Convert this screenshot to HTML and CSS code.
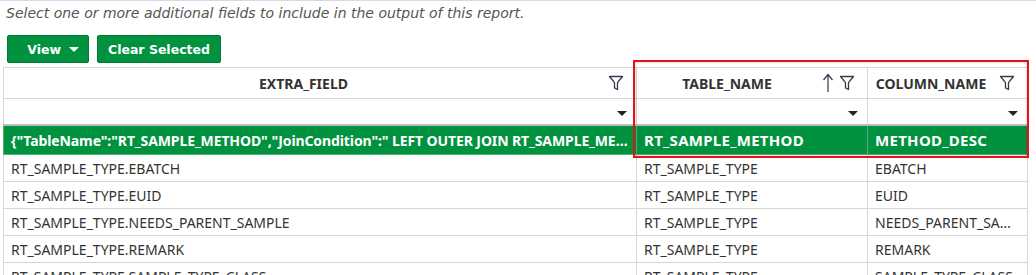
FILE: index.html
```html
<!DOCTYPE html>
<html lang="en">

<head>
  <meta charset="UTF-8">
  <title>Additional Fields</title>
  <link rel="stylesheet" href="styles.css">
</head>

<body>
  <p class="hint">Select one or more additional fields to include in the output of this report.</p>

  <div class="toolbar">
    <button class="btn btn-view">View <span class="caret"></span></button>
    <button class="btn">Clear Selected</button>
  </div>

  <div class="grid">
    <table>
      <colgroup>
        <col class="colExtra">
        <col class="colTable">
        <col class="colColumn">
      </colgroup>
      <thead>
        <tr class="headRow">
          <th>
            <div class="head">
              <span class="label">EXTRA_FIELD</span>
              <svg class="funnel" viewBox="0 0 16 16"><path d="M1.5 1.5h13l-5 6.2v6.8l-3-1.6v-5.2z" /></svg>
            </div>
          </th>
          <th>
            <div class="head">
              <span class="label">TABLE_NAME</span>
              <svg class="sort" viewBox="0 0 12 20"><path d="M6 19V2M1.5 7L6 1.5 10.5 7" /></svg>
              <svg class="funnel" viewBox="0 0 16 16"><path d="M1.5 1.5h13l-5 6.2v6.8l-3-1.6v-5.2z" /></svg>
            </div>
          </th>
          <th>
            <div class="head">
              <span class="label">COLUMN_NAME</span>
              <svg class="funnel" viewBox="0 0 16 16"><path d="M1.5 1.5h13l-5 6.2v6.8l-3-1.6v-5.2z" /></svg>
            </div>
          </th>
        </tr>
        <tr class="filterRow">
          <th><span class="drop"></span></th>
          <th><span class="drop"></span></th>
          <th><span class="drop"></span></th>
        </tr>
      </thead>
      <tbody>
        <tr class="selected">
          <td class="json">{"TableName":"RT_SAMPLE_METHOD","JoinCondition":" LEFT OUTER JOIN RT_SAMPLE_METHOD ON RT_SAMPLE_METHOD.SAMPLE_METHOD_ID"}</td>
          <td>RT_SAMPLE_METHOD</td>
          <td>METHOD_DESC</td>
        </tr>
        <tr>
          <td>RT_SAMPLE_TYPE.EBATCH</td>
          <td>RT_SAMPLE_TYPE</td>
          <td>EBATCH</td>
        </tr>
        <tr>
          <td>RT_SAMPLE_TYPE.EUID</td>
          <td>RT_SAMPLE_TYPE</td>
          <td>EUID</td>
        </tr>
        <tr>
          <td>RT_SAMPLE_TYPE.NEEDS_PARENT_SAMPLE</td>
          <td>RT_SAMPLE_TYPE</td>
          <td>NEEDS_PARENT_SAMPLE</td>
        </tr>
        <tr>
          <td>RT_SAMPLE_TYPE.REMARK</td>
          <td>RT_SAMPLE_TYPE</td>
          <td>REMARK</td>
        </tr>
        <tr>
          <td>RT_SAMPLE_TYPE.SAMPLE_TYPE_CLASS</td>
          <td>RT_SAMPLE_TYPE</td>
          <td>SAMPLE_TYPE_CLASS</td>
        </tr>
      </tbody>
    </table>

    <!-- highlight box drawn over the two right columns -->
    <div class="callout"></div>
  </div>
</body>

</html>
```

FILE: styles.css
```css
body {
  margin: 0;
  background-color: white;
  font-family: "Noto Sans", "DejaVu Sans", sans-serif;
  overflow: hidden;
}

.hint {
  margin: 0;
  padding: 4px 6px 0 6px;
  height: 30px;
  box-sizing: border-box;
  font-family: "DejaVu Sans", Verdana, sans-serif;
  font-style: italic;
  font-size: 14px;
  color: #555;
  border-top: 1px solid #d5dbe6;
}

.toolbar {
  display: flex;
  gap: 8px;
  padding: 5px 0 0 7px;
  height: 37px;
  box-sizing: border-box;
}

.btn {
  background-color: #00923f;
  color: white;
  border: 1px solid #007a34;
  border-radius: 2px;
  height: 28px;
  padding: 0 10px;
  font-family: "DejaVu Sans", Verdana, sans-serif;
  font-weight: bold;
  font-size: 12.5px;
  display: flex;
  align-items: center;
}

.btn-view {
  width: 82px;
  justify-content: flex-end;
  gap: 8px;
  padding-right: 9px;
}

.caret {
  width: 0;
  height: 0;
  border-left: 5px solid transparent;
  border-right: 5px solid transparent;
  border-top: 5px solid white;
}

.grid {
  position: relative;
  margin-left: 3px;
}

table {
  border-collapse: collapse;
  table-layout: fixed;
  width: 1024px;
  font-size: 14px;
  color: #333;
}

.colExtra {
  width: 633px;
}

.colTable {
  width: 231px;
}

.colColumn {
  width: 160px;
}

th,
td {
  border: 1px solid #d6d6d6;
  padding: 0;
}

.headRow th {
  height: 30px;
  font-size: 14px;
  font-weight: bold;
  color: #333;
}

.head {
  display: flex;
  align-items: center;
  padding-right: 12px;
  gap: 5px;
}

.head .label {
  flex: 1;
  text-align: center;
}

.funnel {
  width: 16px;
  height: 16px;
  fill: none;
  stroke: #3b3550;
  stroke-width: 1.3;
  stroke-linejoin: round;
}

.sort {
  width: 12px;
  height: 20px;
  fill: none;
  stroke: #3b3550;
  stroke-width: 1.2;
}

.filterRow th {
  height: 25px;
  text-align: right;
  border-bottom: 2px solid #bdbdbd;
}

.drop {
  display: inline-block;
  width: 0;
  height: 0;
  margin: 0 9px 0 0;
  border-left: 5px solid transparent;
  border-right: 5px solid transparent;
  border-top: 5px solid #222;
  vertical-align: middle;
}

td {
  height: 26px;
  padding: 0 7px;
  white-space: nowrap;
  overflow: hidden;
  text-overflow: ellipsis;
}

.selected td {
  height: 28px;
  background-color: #00923f;
  color: white;
  font-size: 15px;
  font-weight: bold;
  letter-spacing: 0.3px;
  border-color: #4fb27a;
}

.selected td.json {
  font-size: 14px;
  letter-spacing: -0.1px;
}

.callout {
  position: absolute;
  left: 630px;
  top: -7px;
  width: 392px;
  height: 94px;
  border: 2px solid #e8101a;
  box-shadow: inset 0 0 3px rgba(0, 0, 0, 0.25);
}
```
